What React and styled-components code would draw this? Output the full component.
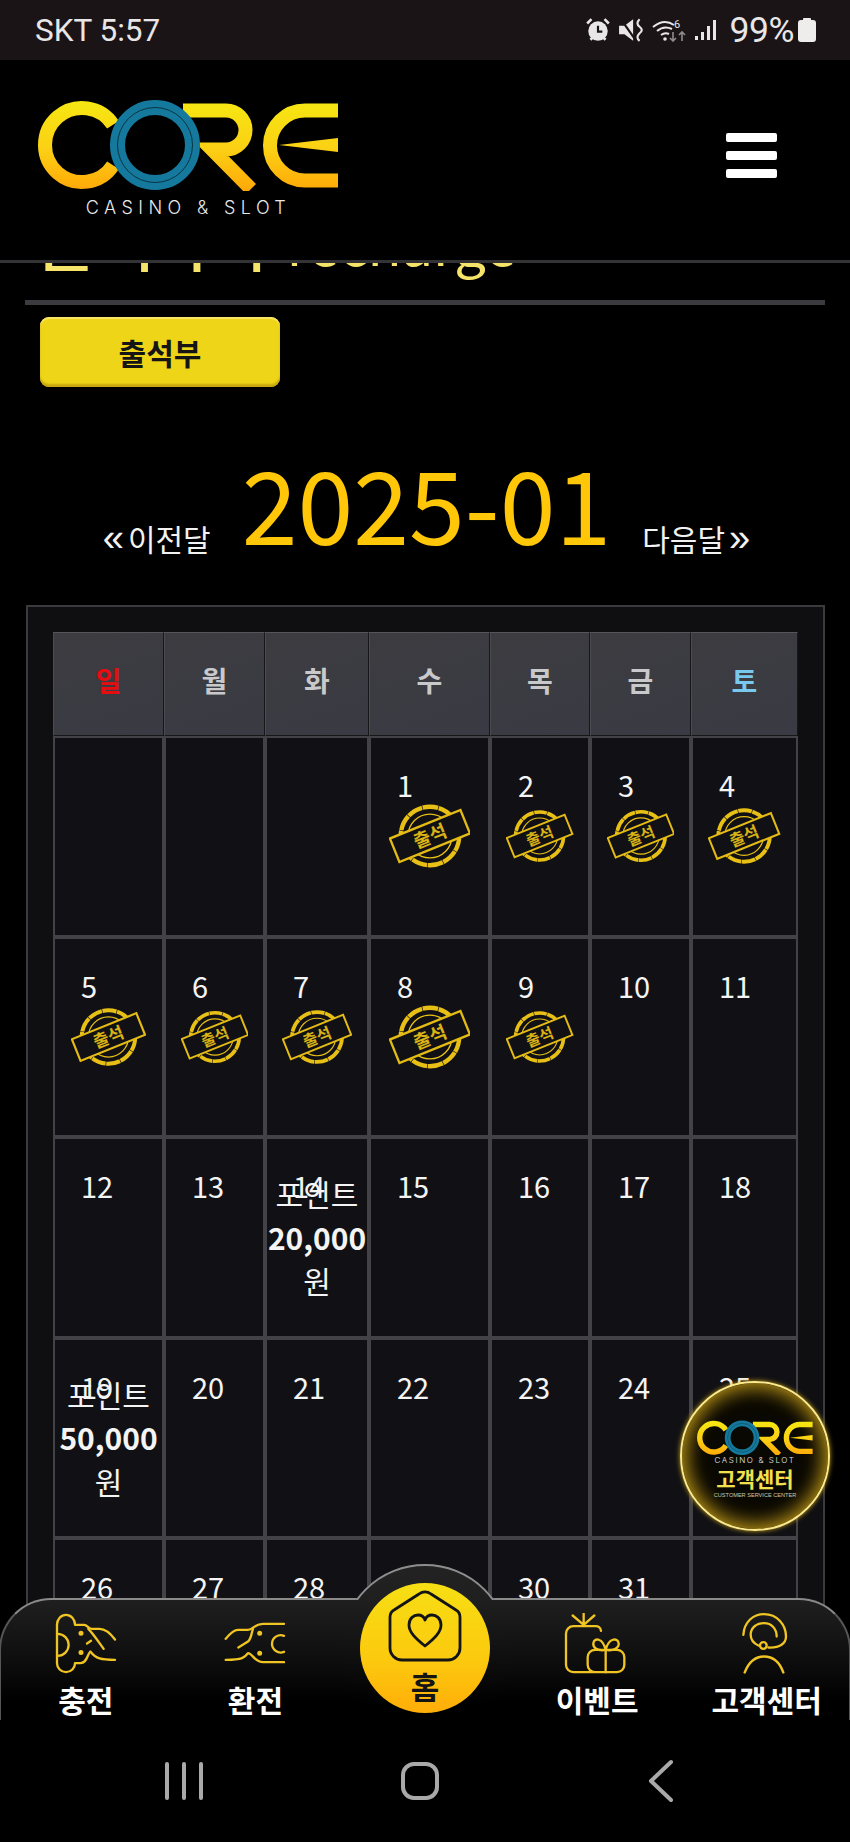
import React from 'react'
import styled, { createGlobalStyle } from 'styled-components'

const KR = `"Noto Sans CJK KR", "Noto Sans", sans-serif`

const GlobalStyle = createGlobalStyle`
  html, body { margin: 0; padding: 0; background: #000; }
  * { box-sizing: border-box; }
`

const Screen = styled.div`
  position: relative;
  width: 850px;
  height: 1842px;
  background: #000;
  display: flex;
  flex-direction: column;
  overflow: hidden;
  font-family: ${KR};
  color: #fff;
`

const StatusBar = styled.div`
  height: 60px;
  flex: none;
  background: #1a1417;
  display: flex;
  align-items: center;
  justify-content: space-between;
  padding: 0 34px 0 35px;
  font-family: Roboto, sans-serif;
  font-size: 31.5px;
  color: #e9e6e7;
`
const StatusIcons = styled.div`
  display: flex;
  align-items: center;
  gap: 7px;
`
const Percent = styled.span`
  margin: 0 -3px 0 6px;
  font-size: 35.5px;
  letter-spacing: -0.5px;
`

const Header = styled.header`
  height: 203px;
  flex: none;
  background: #000;
  border-bottom: 3px solid #333336;
  padding: 39px 73px 0 38px;
  display: flex;
  justify-content: space-between;
`
const LogoBox = styled.div`
  display: flex;
  flex-direction: column;
  align-items: center;
  width: ${p => p.$w}px;
`
const LogoCaption = styled.div`
  font-family: Inter, sans-serif;
  font-weight: 300;
  font-size: ${p => p.$size}px;
  letter-spacing: ${p => p.$track}px;
  line-height: 1.2;
  margin-top: ${p => p.$top}px;
  white-space: nowrap;
  color: #e8e8e8;
`
const Burger = styled.div`
  display: flex;
  flex-direction: column;
  gap: 9px;
  padding-top: 34px;
`
const BurgerBar = styled.span`
  display: block;
  width: 51px;
  height: 9px;
  border-radius: 2px;
  background: #fff;
`

const Main = styled.main`
  position: relative;
  flex: 1;
  min-height: 0;
  overflow: hidden;
  padding: 0 25px;
`
const PageTitle = styled.h1`
  margin: -55px 0 0;
  padding-left: 11px;
  height: 67px;
  font-size: 65px;
  line-height: 60px;
  font-weight: 500;
  white-space: nowrap;
  word-spacing: -3px;
  color: #f5e36a;
`
const TitleLatin = styled.span`
  font-size: 56px;
  font-weight: 400;
`
const Divider = styled.hr`
  margin: 25px 0 0;
  border: 0;
  height: 5px;
  background: #3c3c40;
`
const AttendButton = styled.button`
  display: block;
  margin: 12px 0 0 15px;
  width: 240px;
  height: 70px;
  border: 0;
  border-radius: 9px;
  background: #efd518;
  box-shadow: inset 0 -3px 2px #c7a90f, inset 0 2px 1px #f8e66a;
  font-family: ${KR};
  font-size: 30px;
  font-weight: 700;
  color: #151515;
`
const MonthRow = styled.div`
  display: flex;
  justify-content: center;
  align-items: flex-end;
  gap: 31px;
  padding: 54px 0 0 3px;
  margin-bottom: 44px;
`
const MonthLink = styled.a`
  display: flex;
  align-items: center;
  gap: 4px;
  margin-bottom: 3px;
  font-size: 30px;
  line-height: 40px;
  color: #f2f2f2;
  white-space: nowrap;
`
const Chevrons = styled.span`
  font-family: "Liberation Sans", sans-serif;
  font-size: 38px;
  line-height: 40px;
`
const Year = styled.div`
  font-size: 100.5px;
  line-height: 120px;
  color: #ffc708;
`

const CalendarFrame = styled.section`
  margin: 0 0 0 1px;
  width: 799px;
  border: 2px solid #3b3b3e;
  background: #0f0f12;
  padding: 25px 25px 0;
`
const CalendarGrid = styled.div`
  display: grid;
  grid-template-columns: 111px 101px 104px 121px 100px 101px 107px;
  grid-template-rows: 104px repeat(5, 200.5px);
`
const DayHead = styled.div`
  display: flex;
  align-items: center;
  justify-content: center;
  padding-bottom: 8px;
  border: 1px solid #17171a;
  border-top-color: #55555a;
  border-left-color: #4b4b50;
  background: linear-gradient(160deg, #3c3c40, #3a3a44);
  font-size: 28px;
  font-weight: 700;
  color: ${p => p.$color};
`
const DayCell = styled.div`
  position: relative;
  border: 2px solid #434246;
  background: #111115;
  padding: 25px 0 0 26px;
  font-size: 29px;
  line-height: 42px;
  color: #f4f4f4;
`
const EventNote = styled.div`
  position: absolute;
  top: 33px;
  left: 0;
  right: 0;
  text-align: center;
  font-size: 30px;
  line-height: 43.5px;
`
const EventAmount = styled.div`
  font-size: 30px;
  font-weight: 700;
  white-space: nowrap;
`
const StampBox = styled.div`
  position: absolute;
  top: 50%;
  left: 15%;
  width: 70%;
  transform: translateY(-50%);
`
const StampSvg = styled.svg`
  display: block;
  width: 100%;
`

const FloatBadge = styled.div`
  position: absolute;
  right: 20px;
  bottom: 189px;
  width: 150px;
  height: 150px;
  border-radius: 50%;
  border: 2px solid #fbe98a;
  background: radial-gradient(circle at 50% 50%, #0a0802 52%, #2a2204 76%, #8a6e12 97%);
  box-shadow: inset 0 0 22px #e2b41c, 0 0 5px #c9a21a;
  display: flex;
  flex-direction: column;
  align-items: center;
  padding-top: 37px;
  z-index: 3;
`
const BadgeTitle = styled.div`
  font-size: 21px;
  line-height: 25px;
  font-weight: 700;
  color: #f3e04e;
`
const BadgeSub = styled.div`
  font-family: "Liberation Sans", sans-serif;
  font-size: 5.6px;
  line-height: 9px;
  color: #cfc9a8;
  white-space: nowrap;
`

const TabBar = styled.nav`
  position: absolute;
  left: 0;
  right: 0;
  bottom: 0;
  height: 122px;
  border: 2px solid #565656;
  border-top-color: #8a8a8a;
  border-bottom: 0;
  border-radius: 52px 52px 0 0;
  background: linear-gradient(180deg, #1f1f1f 0%, #0c0c0c 55%, #000 85%);
  z-index: 2;
  display: grid;
  grid-template-columns: repeat(5, 1fr);
  margin: 0 -1px;
`
const Bump = styled.div`
  position: absolute;
  left: 50%;
  top: -36px;
  width: 170px;
  height: 170px;
  margin-left: -85px;
  border-radius: 50%;
  background: linear-gradient(180deg, #232323 0, #1f1f1f 36px, #0c0c0c 103px, #000 140px);

  &::before {
    content: '';
    position: absolute;
    inset: 0;
    border-radius: 50%;
    border: 2px solid #8d8d8d;
    clip-path: inset(0 0 134px 0);
  }
`
const HomeCircle = styled.div`
  position: absolute;
  left: 50%;
  top: -17px;
  width: 130px;
  height: 130px;
  margin-left: -65px;
  border-radius: 50%;
  background: linear-gradient(180deg, #f6df14 0%, #fcc90e 60%, #ffad08 100%);
  display: flex;
  flex-direction: column;
  align-items: center;
  padding-top: 5px;
`
const HomeLabel = styled.div`
  font-size: 31px;
  line-height: 36px;
  margin-top: 4px;
  font-weight: 700;
  color: #141414;
`
const Tab = styled.div`
  grid-column: ${p => p.$col || 'auto'};
  display: flex;
  flex-direction: column;
  align-items: center;
  padding-top: 13px;
`
const TabLabel = styled.div`
  font-size: 30px;
  line-height: 36px;
  margin-top: 7px;
  padding-left: ${p => p.$pad || 0}px;
  font-weight: 700;
  white-space: nowrap;
  color: #fff;
`

const SystemNav = styled.div`
  flex: none;
  height: 122px;
  background: #000;
  display: grid;
  grid-template-columns: 360px 120px 1fr;
  align-items: center;
`
const NavSlot = styled.div`
  display: flex;
  padding-left: ${p => p.$left || 0}px;
  justify-content: ${p => p.$align || 'center'};
`
const RecentBars = styled.div`
  display: flex;
  gap: 13px;
`
const RecentBar = styled.span`
  display: block;
  width: 4px;
  height: 38px;
  border-radius: 2px;
  background: #a9a9a9;
`
const HomeKey = styled.span`
  display: block;
  width: 38px;
  height: 38px;
  border: 4px solid #a9a9a9;
  border-radius: 13px;
`

const CoreMark = ({ width, id }) => (
  <svg width={width} viewBox="18 9 301 92" role="img" aria-label="CORE">
    <defs>
      <linearGradient id={id} x1="0" y1="9" x2="0" y2="100" gradientUnits="userSpaceOnUse">
        <stop offset="0" stopColor="#f6e812" />
        <stop offset="0.55" stopColor="#fbd014" />
        <stop offset="1" stopColor="#ffa908" />
      </linearGradient>
    </defs>
    <g fill="none" stroke={`url(#${id})`} strokeWidth="14">
      <path d="M93 34.8 A37 37 0 1 0 93 75.2" />
      <path d="M163 20.5 H206 A19.5 19.5 0 0 1 206 59.5 H192 L231 99" />
      <path d="M318 20.5 H285 A35 35 0 0 0 285 90.5 H318" />
    </g>
    <polygon points="259,55 318,48 318,62" fill={`url(#${id})`} />
    <circle cx="135" cy="55" r="37.5" fill="none" stroke="#14799c" strokeWidth="15" />
    <circle cx="135" cy="55" r="37.5" fill="none" stroke="#0a3442" strokeWidth="1" />
  </svg>
)

const Stamp = () => (
  <StampSvg viewBox="0 0 84 76">
    <g fill="none" stroke="#e8c015">
      <circle cx="42" cy="38" r="30" strokeWidth="4.5" strokeDasharray="16 0.7" />
      <circle cx="42" cy="38" r="22.5" strokeWidth="1.4" />
    </g>
    <g transform="rotate(-22 42 38)">
      <rect x="3" y="25" width="78" height="26" fill="#111115" stroke="#e3bb14" strokeWidth="2.4" />
      <text x="42" y="45" textAnchor="middle" fontSize="19" fontWeight="700" fill="#d9b315" fontFamily={KR}>
        출석
      </text>
    </g>
  </StampSvg>
)

const iconProps = {
  width: 64,
  height: 61,
  fill: 'none',
  stroke: '#efc423',
  strokeWidth: 7,
  strokeLinecap: 'round',
  strokeLinejoin: 'round',
}

const ChargeIcon = () => (
  <svg viewBox="159 215 192 182" {...iconProps}>
    <path d="M168 250 V365 A27 27 0 0 0 222 365 H238 C258 365 258 340 268 330 C285 352 300 355 342 355" />
    <path d="M168 250 A27 30 0 0 1 222 250 H250 C258 250 262 262 272 262 H296 C315 262 330 278 342 294" />
    <path d="M170 277 A33 33 0 0 1 170 343" />
    <path d="M262 262 C275 275 285 290 308 322 M258 306 L270 298" />
    <circle cx="240" cy="275" r="4" fill="#efc423" />
    <circle cx="240" cy="333" r="4" fill="#efc423" />
  </svg>
)

const ExchangeIcon = () => (
  <svg viewBox="670 215 192 182" {...iconProps}>
    <path d="M853 247 H790 C765 247 760 265 745 265 H715 C700 265 688 280 678 292" />
    <path d="M853 362 H790 C765 362 758 335 745 335 C735 348 730 355 678 355" />
    <path d="M716 318 L745 300 C755 292 755 275 760 262" />
    <path d="M853 283 A26 26 0 1 0 853 331" />
    <circle cx="780" cy="275" r="4" fill="#efc423" />
    <circle cx="780" cy="335" r="4" fill="#efc423" />
  </svg>
)

const EventIcon = () => (
  <svg viewBox="416 215 192 182" {...iconProps}>
    <path d="M530 268 A15 15 0 0 0 512 254 H447 A22 22 0 0 0 425 276 V370 A22 22 0 0 0 447 392 H578 A22 22 0 0 0 600 370 V347 A22 22 0 0 0 578 325 H512 A22 22 0 0 0 490 347 V370 A22 22 0 0 0 512 392" />
    <path d="M478 250 L445 222 M478 250 V216 M478 250 L510 222" />
    <path d="M544 325 V392 M544 325 C520 330 505 318 507 305 C510 288 535 288 544 325 C553 288 580 288 583 305 C585 318 568 330 544 325" />
  </svg>
)

const SupportIcon = () => (
  <svg viewBox="926 215 192 182" {...iconProps}>
    <path d="M960 280 C963 240 990 218 1022 218 C1062 218 1088 250 1088 285 C1088 305 1070 320 1035 318" />
    <path d="M1005 312 C990 305 982 292 982 280 C982 258 1000 245 1022 245 C1045 245 1060 262 1060 285" />
    <circle cx="1020" cy="312" r="10" />
    <path d="M964 393 C975 365 995 345 1022 345 C1050 345 1070 365 1080 393" />
  </svg>
)

const HomeIcon = () => (
  <svg width="80" height="76" viewBox="0 0 80 76" fill="none" stroke="#141414" strokeWidth="2.8" strokeLinejoin="round">
    <path d="M34 6 A10 10 0 0 1 46 6 L71 22 A8 8 0 0 1 75 29 V60 A12 12 0 0 1 63 72 H17 A12 12 0 0 1 5 60 V29 A8 8 0 0 1 9 22 Z" />
    <path d="M40 58 C30 50 24 44 24 37 C24 30 29 27 33 27 C36 27 39 29 40 32 C41 29 44 27 47 27 C51 27 56 30 56 37 C56 44 50 50 40 58 Z" />
  </svg>
)

const StatusGlyphs = () => (
  <>
    <svg width="26" height="26" viewBox="0 0 24 24">
      <circle cx="12" cy="13" r="9" fill="#e9e6e7" />
      <path d="M12 8 V13.5 H16" stroke="#1a1417" strokeWidth="2" fill="none" />
      <path d="M2 6 L6 2 M22 6 L18 2 M5 21 L7 19 M19 21 L17 19" stroke="#e9e6e7" strokeWidth="2.4" />
    </svg>
    <svg width="27" height="26" viewBox="0 0 25 24">
      <path d="M1 8 H6 L14 2 V22 L6 16 H1 Z" fill="#e9e6e7" />
      <path d="M2 1 L16 21" stroke="#1a1417" strokeWidth="2" />
      <path d="M20 2 Q16 6 20 9 Q24 12 20 15 Q16 19 20 22" stroke="#e9e6e7" strokeWidth="2" fill="none" />
    </svg>
    <svg width="36" height="24" viewBox="0 0 36 24" fill="none" stroke="#e9e6e7" strokeWidth="2">
      <path d="M1 9 Q12 0 22 7 M5 13 Q12 7 20 11 M9 17 Q13 14 17 16" />
      <circle cx="13" cy="21" r="1.8" fill="#e9e6e7" stroke="none" />
      <text x="22" y="10" fontSize="11" fill="#e9e6e7" stroke="none" fontFamily="Roboto, sans-serif">6</text>
      <path d="M21 14 V23 M18 20 L21 23 L24 20 M30 23 V14 M27 17 L30 14 L33 17" stroke="#8f8c8d" strokeWidth="1.6" />
    </svg>
    <svg width="22" height="24" viewBox="0 0 22 24" fill="#e9e6e7">
      <rect x="0" y="18" width="3" height="4" />
      <rect x="6" y="14" width="3" height="8" />
      <rect x="12" y="8" width="3" height="14" />
      <rect x="18" y="2" width="3" height="20" />
    </svg>
  </>
)

const Battery = () => (
  <svg width="18" height="24" viewBox="0 0 18 24" fill="#efecec">
    <rect x="5" y="0" width="8" height="3" rx="1" />
    <rect x="0" y="2" width="18" height="22" rx="3" />
  </svg>
)

const heads = [
  { label: '일', color: '#e60c10' },
  { label: '월', color: '#c9c9cc' },
  { label: '화', color: '#c9c9cc' },
  { label: '수', color: '#c9c9cc' },
  { label: '목', color: '#c9c9cc' },
  { label: '금', color: '#c9c9cc' },
  { label: '토', color: '#79c8ee' },
]

const days = [null, null, null, ...Array.from({ length: 31 }, (_, i) => i + 1), null]
const stamped = new Set([1, 2, 3, 4, 5, 6, 7, 8, 9])
const events = { 14: '20,000', 19: '50,000' }

export default function App() {
  return (
    <Screen>
      <GlobalStyle />
      <StatusBar>
        <span>SKT 5:57</span>
        <StatusIcons>
          <StatusGlyphs />
          <Percent>99%</Percent>
          <Battery />
        </StatusIcons>
      </StatusBar>

      <Header>
        <LogoBox $w={301}>
          <CoreMark width={301} id="core-main" />
          <LogoCaption $size={18} $track={5.4} $top={6}>CASINO &amp; SLOT</LogoCaption>
        </LogoBox>
        <Burger>
          <BurgerBar />
          <BurgerBar />
          <BurgerBar />
        </Burger>
      </Header>

      <Main>
        <PageTitle>
          출석 우수<TitleLatin>recharge</TitleLatin>
        </PageTitle>
        <Divider />
        <AttendButton>출석부</AttendButton>
        <MonthRow>
          <MonthLink><Chevrons>«</Chevrons>이전달</MonthLink>
          <Year>2025-01</Year>
          <MonthLink>다음달<Chevrons>»</Chevrons></MonthLink>
        </MonthRow>
        <CalendarFrame>
          <CalendarGrid>
            {heads.map(h => (
              <DayHead key={h.label} $color={h.color}>{h.label}</DayHead>
            ))}
            {days.map((d, i) => (
              <DayCell key={i}>
                {d}
                {stamped.has(d) && (
                  <StampBox>
                    <Stamp />
                  </StampBox>
                )}
                {events[d] && (
                  <EventNote>
                    포인트
                    <EventAmount>{events[d]}</EventAmount>
                    원
                  </EventNote>
                )}
              </DayCell>
            ))}
          </CalendarGrid>
        </CalendarFrame>

        <TabBar>
          <Bump />
          <Tab>
            <ChargeIcon />
            <TabLabel>충전</TabLabel>
          </Tab>
          <Tab>
            <ExchangeIcon />
            <TabLabel>환전</TabLabel>
          </Tab>
          <HomeCircle>
            <HomeIcon />
            <HomeLabel>홈</HomeLabel>
          </HomeCircle>
          <Tab $col={4}>
            <EventIcon />
            <TabLabel $pad={5}>이벤트</TabLabel>
          </Tab>
          <Tab>
            <SupportIcon />
            <TabLabel $pad={5}>고객센터</TabLabel>
          </Tab>
        </TabBar>

        <FloatBadge>
          <CoreMark width={116} id="core-badge" />
          <LogoCaption $size={8} $track={1.6} $top={1}>CASINO &amp; SLOT</LogoCaption>
          <BadgeTitle>고객센터</BadgeTitle>
          <BadgeSub>CUSTOMER SERVICE CENTER</BadgeSub>
        </FloatBadge>
      </Main>

      <SystemNav>
        <NavSlot $align="flex-start" $left={165}>
          <RecentBars>
            <RecentBar />
            <RecentBar />
            <RecentBar />
          </RecentBars>
        </NavSlot>
        <NavSlot>
          <HomeKey />
        </NavSlot>
        <NavSlot $align="flex-start" $left={168}>
          <svg width="26" height="44" viewBox="0 0 26 44" fill="none" stroke="#a9a9a9" strokeWidth="4" strokeLinecap="round" strokeLinejoin="round">
            <path d="M23 3 L3 22 L23 41" />
          </svg>
        </NavSlot>
      </SystemNav>
    </Screen>
  )
}
